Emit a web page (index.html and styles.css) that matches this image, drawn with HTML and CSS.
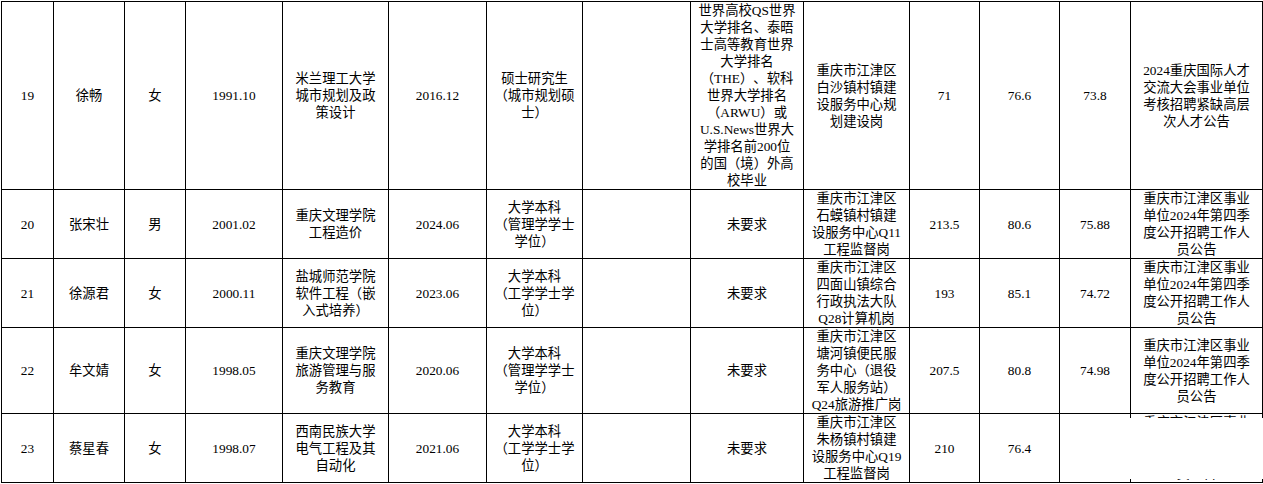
FILE: index.html
```html
<!DOCTYPE html>
<html lang="zh-CN">
<head>
<meta charset="utf-8">
<title>拟聘用人员名单</title>
<link rel="stylesheet" href="styles.css">
</head>
<body>
<div class="page">
  <table class="roster">
    <colgroup>
      <col class="w-no"><col class="w-name"><col class="w-sex"><col class="w-birth">
      <col class="w-school"><col class="w-grad"><col class="w-degree"><col class="w-blank">
      <col class="w-other"><col class="w-post"><col class="w-s1"><col class="w-s2">
      <col class="w-s3"><col class="w-notice">
    </colgroup>
    <tbody>
      <tr>
        <td>19</td>
        <td>徐畅</td>
        <td>女</td>
        <td>1991.10</td>
        <td>米兰理工大学<br>城市规划及政<br>策设计</td>
        <td>2016.12</td>
        <td>硕士研究生<br><span class="fw">（</span>城市规划硕<br>士<span class="fw">）</span></td>
        <td></td>
        <td>世界高校QS世界<br>大学排名<span class="fw">、</span>泰晤<br>士高等教育世界<br>大学排名<br><span class="fw">（</span>THE<span class="fw">）</span><span class="fw">、</span>软科<br>世界大学排名<br><span class="fw">（</span>ARWU<span class="fw">）</span>或<br>U.S.News世界大<br>学排名前200位<br>的国<span class="fw">（</span>境<span class="fw">）</span>外高<br>校毕业</td>
        <td>重庆市江津区<br>白沙镇村镇建<br>设服务中心规<br>划建设岗</td>
        <td>71</td>
        <td>76.6</td>
        <td>73.8</td>
        <td>2024重庆国际人才<br>交流大会事业单位<br>考核招聘紧缺高层<br>次人才公告</td>
      </tr>
      <tr>
        <td>20</td>
        <td>张宋壮</td>
        <td>男</td>
        <td>2001.02</td>
        <td>重庆文理学院<br>工程造价</td>
        <td>2024.06</td>
        <td>大学本科<br><span class="fw">（</span>管理学学士<br>学位<span class="fw">）</span></td>
        <td></td>
        <td>未要求</td>
        <td>重庆市江津区<br>石蟆镇村镇建<br>设服务中心Q11<br>工程监督岗</td>
        <td>213.5</td>
        <td>80.6</td>
        <td>75.88</td>
        <td>重庆市江津区事业<br>单位2024年第四季<br>度公开招聘工作人<br>员公告</td>
      </tr>
      <tr>
        <td>21</td>
        <td>徐源君</td>
        <td>女</td>
        <td>2000.11</td>
        <td>盐城师范学院<br>软件工程<span class="fw">（</span>嵌<br>入式培养<span class="fw">）</span></td>
        <td>2023.06</td>
        <td>大学本科<br><span class="fw">（</span>工学学士学<br>位<span class="fw">）</span></td>
        <td></td>
        <td>未要求</td>
        <td>重庆市江津区<br>四面山镇综合<br>行政执法大队<br>Q28计算机岗</td>
        <td>193</td>
        <td>85.1</td>
        <td>74.72</td>
        <td>重庆市江津区事业<br>单位2024年第四季<br>度公开招聘工作人<br>员公告</td>
      </tr>
      <tr>
        <td>22</td>
        <td>牟文婧</td>
        <td>女</td>
        <td>1998.05</td>
        <td>重庆文理学院<br>旅游管理与服<br>务教育</td>
        <td>2020.06</td>
        <td>大学本科<br><span class="fw">（</span>管理学学士<br>学位<span class="fw">）</span></td>
        <td></td>
        <td>未要求</td>
        <td>重庆市江津区<br>塘河镇便民服<br>务中心<span class="fw">（</span>退役<br>军人服务站<span class="fw">）</span><br>Q24旅游推广岗</td>
        <td>207.5</td>
        <td>80.8</td>
        <td>74.98</td>
        <td>重庆市江津区事业<br>单位2024年第四季<br>度公开招聘工作人<br>员公告</td>
      </tr>
      <tr>
        <td>23</td>
        <td>蔡星春</td>
        <td>女</td>
        <td>1998.07</td>
        <td>西南民族大学<br>电气工程及其<br>自动化</td>
        <td>2021.06</td>
        <td>大学本科<br><span class="fw">（</span>工学学士学<br>位<span class="fw">）</span></td>
        <td></td>
        <td>未要求</td>
        <td>重庆市江津区<br>朱杨镇村镇建<br>设服务中心Q19<br>工程监督岗</td>
        <td>210</td>
        <td>76.4</td>
        <td>74.68</td>
        <td>重庆市江津区事业<br>单位2024年第四季<br>度公开招聘工作人<br>员公告</td>
      </tr>
    </tbody>
  </table>
  <div class="mask"></div>
</div>
</body>
</html>
```

FILE: styles.css
```css
html, body {
  margin: 0;
  padding: 0;
  background: #fff;
}

.page {
  position: relative;
  padding: 1px 0 0 1px;
  width: 1262px;
  height: 483px;
  overflow: hidden;
}

.roster {
  border-collapse: separate;
  border-spacing: 0;
  table-layout: fixed;
  width: 1262px;
  border-left: 1px solid #000;
  border-top: 1px solid #000;
  font-family: "Liberation Serif", "Noto Sans CJK SC", serif;
  font-size: 13.333px;
  line-height: 17px;
  color: #000;
}

.roster td {
  border-right: 1px solid #000;
  border-bottom: 1px solid #000;
  padding: 0 4px;
  text-align: center;
  vertical-align: middle;
  white-space: nowrap;
  overflow: hidden;
}

.fw {
  display: inline-block;
  width: 13.333px;
  text-align: center;
  vertical-align: top;
}

.w-no { width: 52px; }
.w-name { width: 71px; }
.w-sex { width: 61px; }
.w-birth { width: 97px; }
.w-school { width: 106px; }
.w-grad { width: 98px; }
.w-degree { width: 96px; }
.w-blank { width: 108px; }
.w-other { width: 113px; }
.w-post { width: 106px; }
.w-s1 { width: 70px; }
.w-s2 { width: 80px; }
.w-s3 { width: 71px; }
.w-notice { width: 132px; }

.mask {
  position: absolute;
  left: 1060px;
  top: 418px;
  width: 203px;
  height: 61px;
  background: #fff;
}
```
